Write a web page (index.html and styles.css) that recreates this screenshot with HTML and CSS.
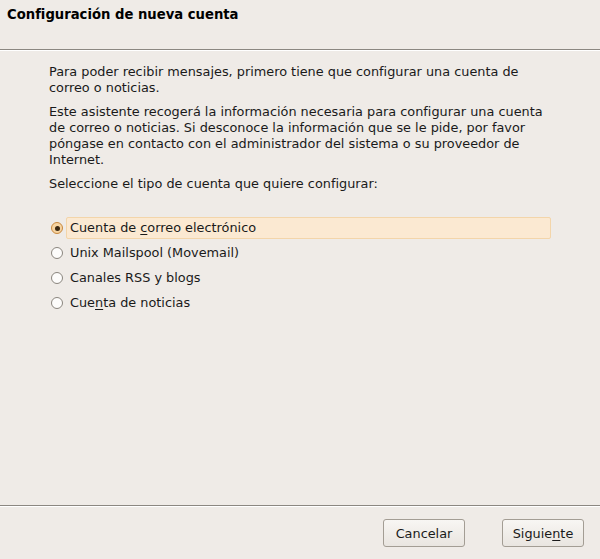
FILE: index.html
```html
<!DOCTYPE html>
<html lang="es">
<head>
<meta charset="utf-8">
<title>Configuración de nueva cuenta</title>
<link rel="stylesheet" href="styles.css">
</head>
<body>
<div class="dialog">
  <header class="header">
    <h1 class="title">Configuración de nueva cuenta</h1>
  </header>
  <main class="content">
    <p class="para">Para poder recibir mensajes, primero tiene que configurar una cuenta de correo o noticias.</p>
    <p class="para">Este asistente recogerá la información necesaria para configurar una cuenta de correo o noticias. Si desconoce la información que se le pide, por favor póngase en contacto con el administrador del sistema o su proveedor de Internet.</p>
    <p class="para">Seleccione el tipo de cuenta que quiere configurar:</p>
    <ul class="options">
      <li class="option selected"><span class="radio checked"></span><span class="label">Cuenta de <u>c</u>orreo electrónico</span></li>
      <li class="option"><span class="radio"></span><span class="label">Unix Mailspool (Movemail)</span></li>
      <li class="option"><span class="radio"></span><span class="label">Canales RSS y blogs</span></li>
      <li class="option"><span class="radio"></span><span class="label">Cue<u>n</u>ta de noticias</span></li>
    </ul>
  </main>
  <footer class="footer">
    <button class="btn">Cancelar</button>
    <button class="btn">Siguie<u>n</u>te</button>
  </footer>
</div>
</body>
</html>
```
FILE: styles.css
```css
html, body {
  margin: 0;
  padding: 0;
}
body {
  background: #efebe7;
  font-family: "DejaVu Sans", "Liberation Sans", sans-serif;
  font-size: 12.85px;
  color: #1a1a1a;
  width: 600px;
  height: 559px;
  overflow: hidden;
}
.dialog {
  display: flex;
  flex-direction: column;
  height: 559px;
}
.header {
  height: 50px;
  box-sizing: border-box;
  padding: 7px 0 0 7px;
  border-bottom: 1px solid #8b8781;
  box-shadow: 0 1px 0 #ffffff;
}
.title {
  margin: 0;
  font-size: 13.2px;
  font-weight: bold;
  line-height: 16px;
  color: #000;
}
.content {
  flex: 1;
  padding: 14px 50px 0 49px;
}
.para {
  margin: 0 0 8px 0;
  line-height: 16px;
}
.options {
  list-style: none;
  margin: 0;
  padding: 17px 0 0 0;
}
.option {
  display: flex;
  align-items: center;
  height: 22px;
  margin-bottom: 3px;
  width: 502px;
}
.option u {
  text-decoration-thickness: 1px;
  text-underline-offset: 2px;
}
.radio {
  width: 12px;
  height: 12px;
  box-sizing: border-box;
  border: 1px solid #8a857e;
  border-radius: 50%;
  background: #fdfcfb;
  margin-left: 2px;
  margin-right: 3px;
  flex: none;
  position: relative;
}
.radio.checked {
  border-color: #c9893f;
  background: #f6d4a2;
}
.radio.checked::after {
  content: "";
  position: absolute;
  left: 2.5px;
  top: 2.5px;
  width: 5px;
  height: 5px;
  border-radius: 50%;
  background: #3a2812;
}
.label {
  line-height: 20px;
  flex: 1;
  padding-left: 3px;
  border: 1px solid transparent;
  border-radius: 2px;
}
.option.selected .label {
  background: #fbe9d2;
  border-color: #f3d5aa;
}
.footer {
  height: 54px;
  box-sizing: border-box;
  border-top: 1px solid #8b8781;
  box-shadow: inset 0 1px 0 #ffffff;
  display: flex;
  justify-content: flex-end;
  align-items: flex-start;
  padding: 13px 16px 0 0;
  gap: 37px;
}
.btn {
  width: 82px;
  height: 28px;
  font-family: "DejaVu Sans", "Liberation Sans", sans-serif;
  font-size: 12.85px;
  color: #1a1a1a;
  border: 1px solid #a39d94;
  border-radius: 3px;
  background: linear-gradient(#f8f6f3, #e9e5e0);
  padding: 0;
}
.btn u {
  text-underline-offset: 2px;
}
```
